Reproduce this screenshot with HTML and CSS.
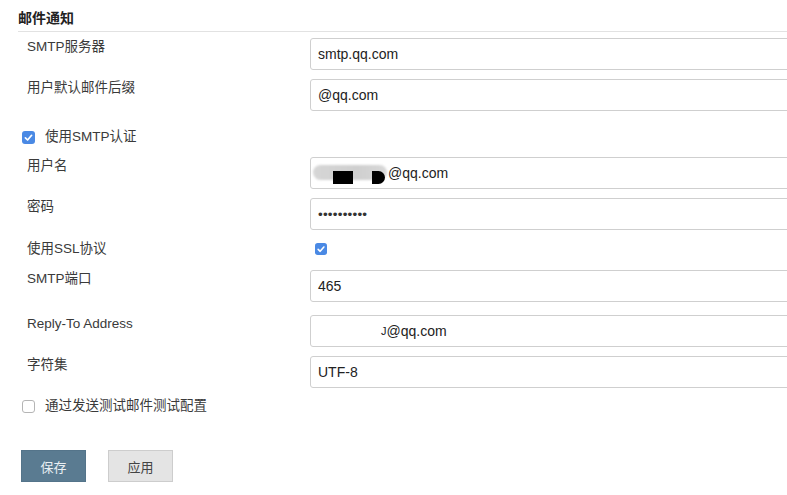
FILE: index.html
```html
<!DOCTYPE html>
<html lang="zh-CN">
<head>
<meta charset="utf-8">
<title>邮件通知</title>
<link rel="stylesheet" href="styles.css">
</head>
<body>
<div class="page">
  <div class="section-title">邮件通知</div>

  <div class="row first">
    <div class="label">SMTP服务器</div>
    <div class="field">smtp.qq.com</div>
  </div>

  <div class="row">
    <div class="label">用户默认邮件后缀</div>
    <div class="field">@qq.com</div>
  </div>

  <div class="check-row auth">
    <span class="cb checked"><svg width="13" height="13" viewBox="0 0 13 13"><rect x="0" y="0" width="13" height="13" rx="3" fill="#4a89e4"/><path d="M3.4 6.9 L5.6 9 L9.6 4.3" stroke="#fff" stroke-width="1.7" fill="none" stroke-linecap="round" stroke-linejoin="round"/></svg></span>
    <span class="cb-label">使用SMTP认证</span>
  </div>

  <div class="row user">
    <div class="label">用户名</div>
    <div class="field"><span class="redact"><span class="blur"></span><span class="blk"></span><span class="blk-d"></span></span>@qq.com</div>
  </div>

  <div class="row">
    <div class="label">密码</div>
    <div class="field dots">••••••••••</div>
  </div>

  <div class="row ssl">
    <div class="label">使用SSL协议</div>
    <div class="ssl-box"><span class="cb checked"><svg width="12" height="12" viewBox="0 0 13 13"><rect x="0" y="0" width="13" height="13" rx="3" fill="#4a89e4"/><path d="M3.4 6.9 L5.6 9 L9.6 4.3" stroke="#fff" stroke-width="1.7" fill="none" stroke-linecap="round" stroke-linejoin="round"/></svg></span></div>
  </div>

  <div class="row port">
    <div class="label">SMTP端口</div>
    <div class="field">465</div>
  </div>

  <div class="row reply">
    <div class="label">Reply-To Address</div>
    <div class="field"><span class="frag">J</span>@qq.com</div>
  </div>

  <div class="row">
    <div class="label">字符集</div>
    <div class="field">UTF-8</div>
  </div>

  <div class="check-row test">
    <span class="cb unchecked"></span>
    <span class="cb-label">通过发送测试邮件测试配置</span>
  </div>

  <div class="buttons">
    <button class="btn primary">保存</button>
    <button class="btn secondary">应用</button>
  </div>
</div>
</body>
</html>
```
FILE: styles.css
```css
html, body {
  margin: 0;
  padding: 0;
  background: #fff;
  overflow: hidden;
}
body {
  font-family: "Liberation Sans", "Noto Sans CJK SC", sans-serif;
  color: #333;
  font-size: 13.5px;
}
.page {
  padding-top: 10px;
  width: 787px;
  height: 495px;
  overflow: hidden;
}
.section-title {
  margin-left: 18px;
  font-weight: bold;
  font-size: 14px;
  line-height: 16px;
  padding-bottom: 5px;
  border-bottom: 1px solid #e2e2e2;
  color: #222;
}
.row {
  display: grid;
  grid-template-columns: 283px 520px;
  padding-left: 27px;
  margin-top: 9px;
}
.row.first { margin-top: 6px; }
.row.user { margin-top: 12px; }
.row.ssl { margin-top: 10px; height: 16px; }
.row.port { margin-top: 14px; }
.row.reply { margin-top: 13px; }
.label {
  padding-top: 1px;
  line-height: 16px;
  color: #3a3a3a;
}
.field {
  box-sizing: border-box;
  height: 32px;
  border: 1px solid #cfcfcf;
  border-radius: 3px;
  padding-left: 7px;
  display: flex;
  align-items: center;
  font-size: 14px;
  color: #222;
  background: #fff;
}
.field.dots {
  font-size: 13.5px;
  letter-spacing: 0.2px;
  color: #333;
}
.check-row {
  display: flex;
  align-items: center;
  gap: 10px;
  padding-left: 22px;
  height: 16px;
}
.check-row.auth { margin-top: 18px; }
.check-row.test { margin-top: 10px; }
.cb {
  display: inline-flex;
  width: 13px;
  height: 13px;
}
.cb.unchecked {
  box-sizing: border-box;
  border: 1px solid #b5b5b5;
  border-radius: 3px;
  background: #fff;
}
.cb-label {
  line-height: 16px;
  color: #3a3a3a;
}
.ssl-box {
  display: flex;
  align-items: center;
  padding-left: 5px;
}
.ssl-box .cb { width: 12px; height: 12px; }
.redact {
  position: relative;
  display: inline-block;
  width: 75px;
  height: 20px;
  margin-left: -5px;
}
.blur {
  position: absolute;
  left: 0;
  top: 2px;
  width: 74px;
  height: 15px;
  border-radius: 8px;
  background: linear-gradient(90deg, #d6d6d6, #cfcfcf 60%, #d8d8d8);
  filter: blur(1.2px);
}
.blk {
  position: absolute;
  left: 20px;
  top: 8px;
  width: 20px;
  height: 13px;
  background: #000;
}
.blk-d {
  position: absolute;
  left: 59px;
  top: 8px;
  width: 13px;
  height: 13px;
  background: #000;
  border-radius: 0 7px 7px 0;
}
.frag {
  margin-left: 63px;
  font-size: 11px;
}
.buttons {
  display: flex;
  gap: 22px;
  padding-left: 21px;
  margin-top: 36px;
}
.btn {
  box-sizing: border-box;
  width: 65px;
  height: 32px;
  font-family: "Liberation Sans", "Noto Sans CJK SC", sans-serif;
  font-size: 13px;
  border-radius: 0;
  padding: 0;
}
.btn.primary {
  background: #5a7b91;
  border: 1px solid #54748a;
  color: #e9eff3;
}
.btn.secondary {
  background: #e4e4e4;
  border: 1px solid #cdcdcd;
  color: #444;
}
```
